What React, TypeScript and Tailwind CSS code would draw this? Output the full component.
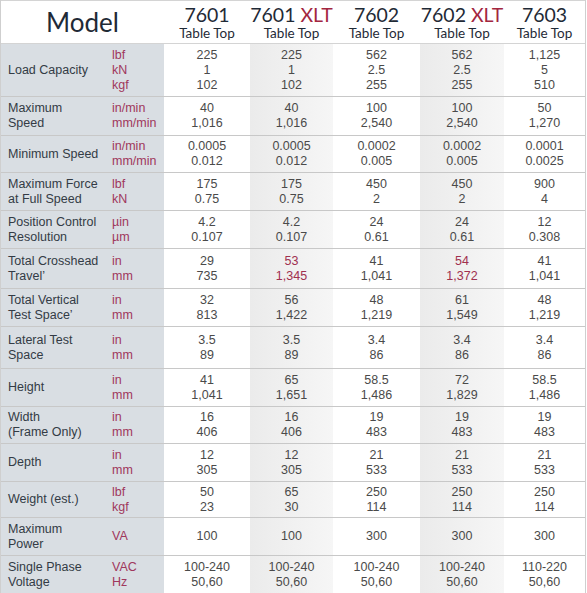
import React from "react";

type Row = {
  label: string[];
  units: string[];
  vals: string[][];
  red?: number[];
  h: string;
};

const rows: Row[] = [
  { label: ["Load Capacity"], units: ["lbf", "kN", "kgf"], vals: [["225", "1", "102"], ["225", "1", "102"], ["562", "2.5", "255"], ["562", "2.5", "255"], ["1,125", "5", "510"]], h: "h-[53px]" },
  { label: ["Maximum", "Speed"], units: ["in/min", "mm/min"], vals: [["40", "1,016"], ["40", "1,016"], ["100", "2,540"], ["100", "2,540"], ["50", "1,270"]], h: "h-[39px]" },
  { label: ["Minimum Speed"], units: ["in/min", "mm/min"], vals: [["0.0005", "0.012"], ["0.0005", "0.012"], ["0.0002", "0.005"], ["0.0002", "0.005"], ["0.0001", "0.0025"]], h: "h-[37px]" },
  { label: ["Maximum Force", "at Full Speed"], units: ["lbf", "kN"], vals: [["175", "0.75"], ["175", "0.75"], ["450", "2"], ["450", "2"], ["900", "4"]], h: "h-[38px]" },
  { label: ["Position Control", "Resolution"], units: ["\u00b5in", "\u00b5m"], vals: [["4.2", "0.107"], ["4.2", "0.107"], ["24", "0.61"], ["24", "0.61"], ["12", "0.308"]], h: "h-[38px]" },
  { label: ["Total Crosshead", "Travel\u2019"], units: ["in", "mm"], vals: [["29", "735"], ["53", "1,345"], ["41", "1,041"], ["54", "1,372"], ["41", "1,041"]], red: [1, 3], h: "h-[40px]" },
  { label: ["Total Vertical", "Test Space\u2019"], units: ["in", "mm"], vals: [["32", "813"], ["56", "1,422"], ["48", "1,219"], ["61", "1,549"], ["48", "1,219"]], h: "h-[38px]" },
  { label: ["Lateral Test", "Space"], units: ["in", "mm"], vals: [["3.5", "89"], ["3.5", "89"], ["3.4", "86"], ["3.4", "86"], ["3.4", "86"]], h: "h-[42px]" },
  { label: ["Height"], units: ["in", "mm"], vals: [["41", "1,041"], ["65", "1,651"], ["58.5", "1,486"], ["72", "1,829"], ["58.5", "1,486"]], h: "h-[38px]" },
  { label: ["Width", "(Frame Only)"], units: ["in", "mm"], vals: [["16", "406"], ["16", "406"], ["19", "483"], ["19", "483"], ["19", "483"]], h: "h-[37px]" },
  { label: ["Depth"], units: ["in", "mm"], vals: [["12", "305"], ["12", "305"], ["21", "533"], ["21", "533"], ["21", "533"]], h: "h-[38px]" },
  { label: ["Weight (est.)"], units: ["lbf", "kgf"], vals: [["50", "23"], ["65", "30"], ["250", "114"], ["250", "114"], ["250", "114"]], h: "h-[36px]" },
  { label: ["Maximum", "Power"], units: ["VA"], vals: [["100"], ["100"], ["300"], ["300"], ["300"]], h: "h-[38px]" },
  { label: ["Single Phase", "Voltage"], units: ["VAC", "Hz"], vals: [["100-240", "50,60"], ["100-240", "50,60"], ["100-240", "50,60"], ["100-240", "50,60"], ["110-220", "50,60"]], h: "h-[37px]" },
];

const grid = "grid grid-cols-[111px_52px_86px_83px_87px_84px_81px]";
const greyCol = "bg-gradient-to-r from-[#ebebeb] to-[#f6f6f6]";

const headers = [
  { n: "7601", xlt: false },
  { n: "7601", xlt: true },
  { n: "7602", xlt: false },
  { n: "7602", xlt: true },
  { n: "7603", xlt: false },
];

export default function App() {
  return (
    <div className="w-[587px] h-[593px] bg-white overflow-hidden font-['Liberation_Sans',Arial,sans-serif]">
      <div className="w-[586px] border-l border-r border-[#cfcfcf]">
        {/* header */}
        <div className={`${grid} h-[44px] border-b border-t border-[#d4d4d4] font-['Lato',sans-serif] text-[#1f2a36]`}>
          <div className="col-span-2 flex items-center justify-center text-[26px] leading-none pb-[1px]">
            Model
          </div>
          {headers.map((h, i) => (
            <div key={i} className="flex flex-col items-center justify-center whitespace-nowrap">
              <div className="text-[19.5px] leading-[21px] whitespace-nowrap">
                {h.n}
                {h.xlt && <span className="text-[#a3263f]"> XLT</span>}
              </div>
              <div className="text-[13.5px] leading-[14px] mt-[1px] whitespace-nowrap">Table Top</div>
            </div>
          ))}
        </div>
        {rows.map((r, ri) => (
          <div
            key={ri}
            className={`${grid} ${r.h} ${ri < rows.length - 1 ? "border-b border-[#c8c8c8]" : ""} text-[12.5px] leading-[15px]`}
          >
            <div className="bg-[#d9dee3] flex flex-col justify-center pl-[7px] text-[#333b45]">
              {r.label.map((l, i) => (
                <div key={i} className="whitespace-nowrap">{l}</div>
              ))}
            </div>
            <div className="bg-[#d9dee3] flex flex-col justify-center text-[#a0375c]">
              {r.units.map((u, i) => (
                <div key={i}>{u}</div>
              ))}
            </div>
            {r.vals.map((v, ci) => (
              <div
                key={ci}
                className={`flex flex-col items-center justify-center ${ci === 1 || ci === 3 ? greyCol : "bg-white"} ${r.red && r.red.includes(ci) ? "text-[#a0304f]" : "text-[#4a4a4a]"}`}
              >
                {v.map((x, i) => (
                  <div key={i}>{x}</div>
                ))}
              </div>
            ))}
          </div>
        ))}
      </div>
    </div>
  );
}
